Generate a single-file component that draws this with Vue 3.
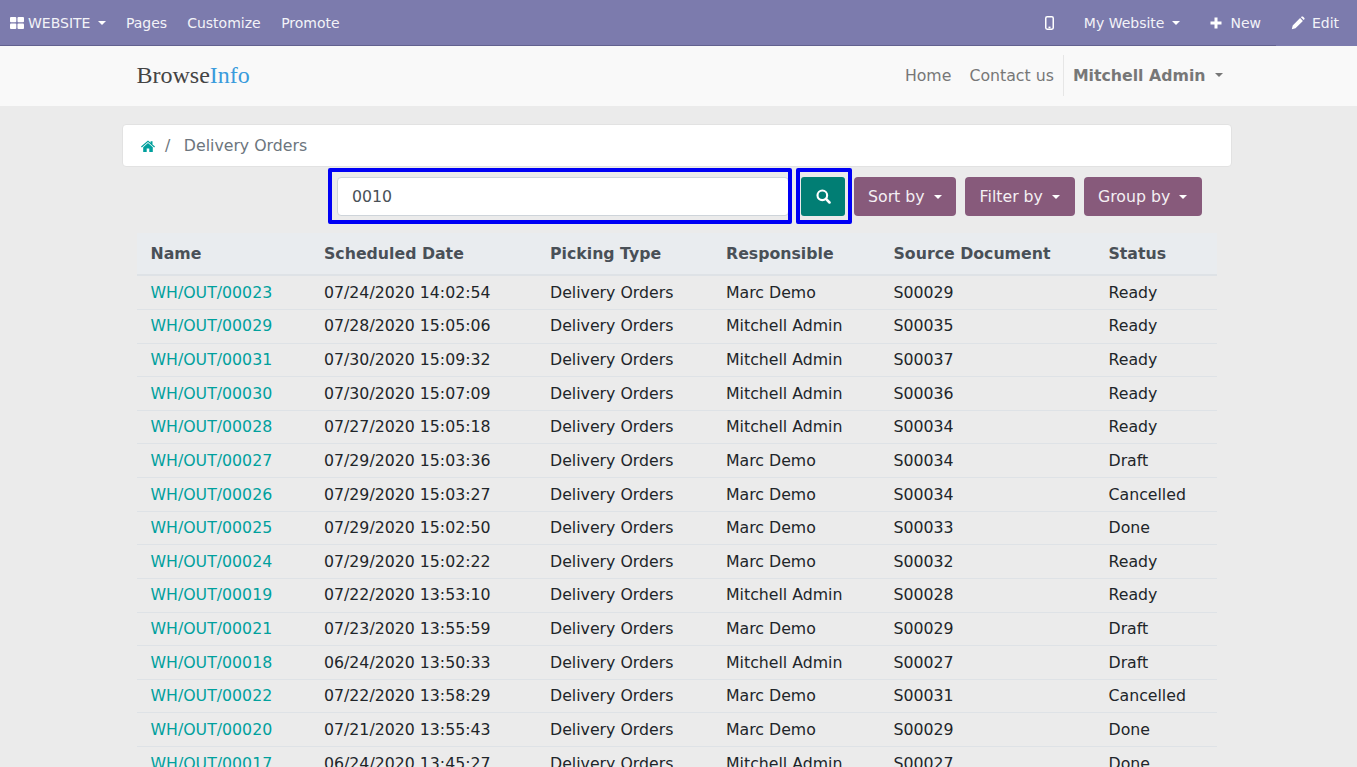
<script setup>
const rows = [
  ['WH/OUT/00023', '07/24/2020 14:02:54', 'Marc Demo', 'S00029', 'Ready'],
  ['WH/OUT/00029', '07/28/2020 15:05:06', 'Mitchell Admin', 'S00035', 'Ready'],
  ['WH/OUT/00031', '07/30/2020 15:09:32', 'Mitchell Admin', 'S00037', 'Ready'],
  ['WH/OUT/00030', '07/30/2020 15:07:09', 'Mitchell Admin', 'S00036', 'Ready'],
  ['WH/OUT/00028', '07/27/2020 15:05:18', 'Mitchell Admin', 'S00034', 'Ready'],
  ['WH/OUT/00027', '07/29/2020 15:03:36', 'Marc Demo', 'S00034', 'Draft'],
  ['WH/OUT/00026', '07/29/2020 15:03:27', 'Marc Demo', 'S00034', 'Cancelled'],
  ['WH/OUT/00025', '07/29/2020 15:02:50', 'Marc Demo', 'S00033', 'Done'],
  ['WH/OUT/00024', '07/29/2020 15:02:22', 'Marc Demo', 'S00032', 'Ready'],
  ['WH/OUT/00019', '07/22/2020 13:53:10', 'Mitchell Admin', 'S00028', 'Ready'],
  ['WH/OUT/00021', '07/23/2020 13:55:59', 'Marc Demo', 'S00029', 'Draft'],
  ['WH/OUT/00018', '06/24/2020 13:50:33', 'Mitchell Admin', 'S00027', 'Draft'],
  ['WH/OUT/00022', '07/22/2020 13:58:29', 'Marc Demo', 'S00031', 'Cancelled'],
  ['WH/OUT/00020', '07/21/2020 13:55:43', 'Marc Demo', 'S00029', 'Done'],
  ['WH/OUT/00017', '06/24/2020 13:45:27', 'Mitchell Admin', 'S00027', 'Done'],
]
const sorters = ['Sort by', 'Filter by', 'Group by']
</script>

<template>
  <div class="page">
    <div class="topbar">
      <div class="bar-main">
        <div class="bar-left">
          <a class="item brand">
            <svg class="ic-grid" viewBox="0 0 14 12" width="14" height="12">
              <rect x="0" y="0" width="6.3" height="5.3" rx="1" fill="#fff" />
              <rect x="7.5" y="0" width="6.5" height="5.3" rx="1" fill="#fff" />
              <rect x="0" y="6.6" width="6.3" height="5.4" rx="1" fill="#fff" />
              <rect x="7.5" y="6.6" width="6.5" height="5.4" rx="1" fill="#fff" />
            </svg>
            <span>WEBSITE</span><i class="caret white c-website"></i>
          </a>
          <a class="item pages">Pages</a>
          <a class="item customize">Customize</a>
          <a class="item">Promote</a>
        </div>
        <div class="bar-right">
          <svg class="ic-mobile" viewBox="0 0 9 14" width="9" height="14">
            <rect x="0.75" y="0.75" width="7.5" height="12.5" rx="1.4" fill="none" stroke="#fff" stroke-width="1.5" />
            <rect x="3.5" y="10.6" width="2" height="1.6" fill="#fff" />
          </svg>
          <a class="item mysite">My Website<i class="caret white c-site"></i></a>
          <a class="item new">
            <svg viewBox="0 0 12 12" width="12" height="12">
              <path d="M4.5 0.5h3v4h4v3h-4v4h-3v-4h-4v-3h4z" fill="#fff" />
            </svg>
            <span>New</span>
          </a>
        </div>
      </div>
      <div class="bar-edit">
        <a class="item edit">
          <svg viewBox="0 0 14 14" width="14" height="14">
            <path d="M0.8 13.2l0.9-3.7 7.4-7.4 2.8 2.8-7.4 7.4zM9.9 1.3l0.8-0.7c0.4-0.3 0.9-0.3 1.2 0l1.5 1.5c0.3 0.3 0.3 0.8 0 1.2l-0.7 0.8z" fill="#fff" />
          </svg>
          <span>Edit</span>
        </a>
      </div>
    </div>

    <header class="site-head">
      <div class="logo">Browse<span>Info</span></div>
      <nav class="site-nav">
        <a>Home</a>
        <a class="contact">Contact us</a>
        <div class="user"><b>Mitchell Admin</b><i class="caret grey"></i></div>
      </nav>
    </header>

    <main class="content">
      <div class="crumb">
        <svg class="ic-home" viewBox="0 0 14 12" width="14" height="12">
          <path d="M7 0.4L9.6 2.7V1.2h1.9v3.2L14 6.6l-0.8 0.9L7 2.1 0.8 7.5 0 6.6z" fill="#00a09d" />
          <path d="M2.2 7.2L7 3l4.8 4.2V12H8.3V8.5H5.7V12H2.2z" fill="#00a09d" />
        </svg>
        <span class="slash">/</span>
        <span class="crumb-text">Delivery Orders</span>
      </div>

      <div class="toolbar">
        <div class="search-wrap">
          <input class="search" value="0010" />
          <span class="mark mark-input"></span>
        </div>
        <div class="btn-wrap">
          <button class="btn-search" aria-label="Search">
            <svg viewBox="0 0 14 14" width="15" height="15">
              <circle cx="5.9" cy="5.9" r="4.5" fill="none" stroke="#fff" stroke-width="2" />
              <path d="M9.3 9.3l3.3 3.3" stroke="#fff" stroke-width="2.4" stroke-linecap="round" />
            </svg>
          </button>
          <span class="mark mark-btn"></span>
        </div>
        <button v-for="s in sorters" :key="s" class="btn-drop">{{ s }}<i class="caret white c-drop"></i></button>
      </div>

      <table class="orders">
        <colgroup>
          <col class="w1" /><col class="w2" /><col class="w3" /><col class="w4" /><col class="w5" /><col />
        </colgroup>
        <thead>
          <tr>
            <th>Name</th><th>Scheduled Date</th><th>Picking Type</th><th>Responsible</th><th>Source Document</th><th>Status</th>
          </tr>
        </thead>
        <tbody>
          <tr v-for="r in rows" :key="r[0]">
            <td><a>{{ r[0] }}</a></td>
            <td>{{ r[1] }}</td>
            <td>Delivery Orders</td>
            <td>{{ r[2] }}</td>
            <td>{{ r[3] }}</td>
            <td>{{ r[4] }}</td>
          </tr>
        </tbody>
      </table>
    </main>
  </div>
</template>

<style>
html, body { margin: 0; height: 100%; overflow: hidden; background: #ebebeb; }
</style>

<style scoped>
.page {
  height: 767px;
  overflow: hidden;
  background: #ebebeb;
  font-family: "DejaVu Sans", sans-serif;
  font-size: 15.75px;
  color: #212529;
}
.topbar { display: flex; height: 46px; background: #7c7bad; color: #fff; font-size: 14px; }
.bar-main {
  flex: 1;
  display: flex;
  justify-content: space-between;
  border-bottom: 1px solid #62618f;
  box-sizing: border-box;
}
.bar-edit { width: 81px; box-sizing: border-box; padding-left: 15px; display: flex; align-items: center; }
.bar-left, .bar-right { display: flex; align-items: center; }
.bar-left { padding-left: 10px; }
.bar-right { padding-right: 15px; }
.item { display: flex; align-items: center; color: #f3f3f8; white-space: nowrap; }
.ic-grid { margin-right: 4px; }
.pages { margin-left: 19.5px; }
.customize { margin: 0 20.5px 0 20px; }
.ic-mobile { margin-right: 30px; }
.mysite { margin-right: 30px; }
.new svg { margin-right: 8px; }
.edit svg { margin-right: 7px; }

.caret { display: inline-block; width: 0; height: 0; border-left: 4px solid transparent; border-right: 4px solid transparent; border-top: 4px solid #fff; }
.caret.grey { border-top-color: #777; margin-left: 9.5px; }
.c-website { margin-left: 8px; }
.c-site { margin-left: 8px; }
.c-drop { margin-left: 9px; }

.site-head {
  height: 60px;
  box-sizing: border-box;
  background: #f9f9f9;
  display: flex;
  align-items: center;
  justify-content: space-between;
  padding: 0 134px 2px 136.5px;
}
.logo { font-family: "Liberation Serif", serif; font-size: 24px; color: #444; }
.logo span { color: #3a9bdc; }
.site-nav { display: flex; align-items: center; color: #777; }
.contact { margin-left: 18px; margin-right: 9px; }
.user { display: flex; align-items: center; height: 41px; border-left: 1px solid #e6e6e6; padding-left: 9px; }

.content { width: 1110px; margin-left: 122px; padding-top: 18px; }
.crumb {
  height: 43px;
  box-sizing: border-box;
  background: #fff;
  border: 1px solid #e2e2e2;
  border-radius: 4px;
  display: flex;
  align-items: center;
  padding-left: 18px;
}
.slash { color: #6c757d; margin-left: 10px; }
.crumb-text { color: #6c757d; margin-left: 13.5px; }

.toolbar { display: flex; margin-top: 10px; padding-left: 215px; height: 39px; }
.search-wrap, .btn-wrap { position: relative; }
.search {
  display: block;
  width: 452px;
  height: 39px;
  box-sizing: border-box;
  padding: 0 14px;
  border: 1px solid #ced4da;
  border-radius: 4px;
  background: #fff;
  color: #495057;
  font: 15.75px "DejaVu Sans", sans-serif;
  outline: none;
}
.btn-wrap { margin-left: 12px; margin-right: 9px; }
.btn-search {
  display: flex;
  align-items: center;
  justify-content: center;
  width: 44px;
  height: 39px;
  padding: 0;
  border: 0;
  border-radius: 3px;
  background: #017e74;
}
.mark { position: absolute; top: -9px; height: 48px; border: 4px solid #0000f5; border-radius: 2px; pointer-events: none; }
.mark-input { left: -9px; width: 456px; }
.mark-btn { left: -5px; width: 48px; }
.btn-drop {
  display: flex;
  align-items: center;
  height: 39px;
  margin-right: 9px;
  padding: 0 14px;
  border: 0;
  border-radius: 4px;
  background: #875a7b;
  color: #f4eff3;
  font: 15.75px "DejaVu Sans", sans-serif;
  white-space: nowrap;
}
.btn-drop:nth-child(4) { padding: 0 15px; }
.btn-drop:nth-child(5) { padding: 0 15px 0 14px; }

.orders {
  width: 1080px;
  margin: 17px 0 0 15px;
  border-collapse: collapse;
  table-layout: fixed;
}
.w1 { width: 173px; }
.w2 { width: 226px; }
.w3 { width: 176px; }
.w4 { width: 167.5px; }
.w5 { width: 215px; }
th, td { text-align: left; line-height: 23.625px; padding: 4.5px 14px; white-space: nowrap; }
th:first-child, td:first-child { padding-left: 13.5px; }
th { padding-top: 8.85px; padding-bottom: 8.85px; background: #e9ecef; color: #495057; font-weight: 700; border-bottom: 2px solid #dee2e6; }
td { border-top: 1px solid #dee2e6; color: #212529; }
td a { color: #00a09d; }
</style>
